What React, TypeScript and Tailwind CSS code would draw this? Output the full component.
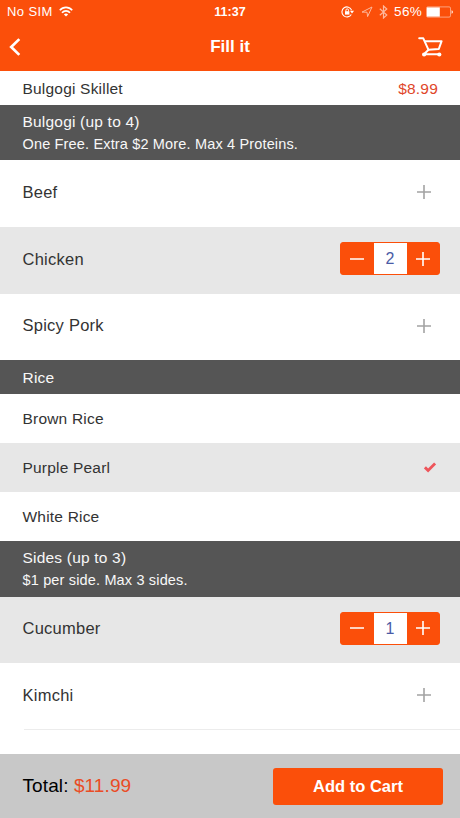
import clsx from 'clsx'

function StatusBar() {
  return (
    <div className="grid h-6 grid-cols-[1fr_auto_1fr] items-center pl-[7px] pr-[7px] text-[13px] leading-6">
      <div className="flex items-center gap-[6px]">
        <span className="tracking-[0.4px]">No SIM</span>
        <svg width="14" height="11" viewBox="0 0 14 11" fill="none" stroke="currentColor" strokeWidth="1.7" className="-mt-px">
          <path d="M0.8 4.2C4.2 0.4 9.8 0.4 13.2 4.2" />
          <path d="M3 6.7c2.2-2.4 5.8-2.4 8 0" />
          <path d="M7 10.6 4.9 8.4c1.2-1.1 3-1.1 4.2 0Z" fill="currentColor" stroke="none" />
        </svg>
      </div>
      <span className="text-[12.5px] font-bold">11:37</span>
      <div className="flex items-center justify-end">
        <svg width="14" height="12" viewBox="0 0 14 12" fill="none" stroke="currentColor" className="mr-[6px]">
          <path d="M10.6 4.1A5 5 0 1 0 10.3 8.4" strokeWidth="1.1" />
          <path d="M8.9 4.8h4.2L11 7.4Z" fill="currentColor" stroke="none" />
          <rect x="4" y="5.2" width="4.4" height="3.4" fill="currentColor" stroke="none" />
          <path d="M4.9 5.4V4.2a1.3 1.3 0 0 1 2.6 0v1.2" strokeWidth="1" />
        </svg>
        <svg width="12" height="12" viewBox="0 0 12 12" fill="none" stroke="currentColor" className="mr-[6px] opacity-60">
          <path d="M1 6.1 11 1 6.6 10.6 6 6.2Z" strokeWidth="1" />
        </svg>
        <svg width="9" height="14" viewBox="0 0 9 14" fill="none" stroke="currentColor" className="mr-[6px] opacity-60">
          <path d="M0.8 3.8 7.8 10 4.5 13V1L7.8 4 0.8 10.2" strokeWidth="1.2" />
        </svg>
        <span className="mr-[4px] text-[13.5px] tracking-[0.3px]">56%</span>
        <svg width="27" height="12" viewBox="0 0 27 12" fill="none">
          <rect x="0.5" y="0.9" width="24" height="10.2" rx="1.3" stroke="#fff" strokeOpacity="0.6" strokeWidth="0.8" />
          <rect x="1" y="1.4" width="12.8" height="9.2" fill="#fff" />
          <path d="M25.6 4.2c1.6 0.6 1.6 3 0 3.6Z" fill="#fff" />
        </svg>
      </div>
    </div>
  )
}

function NavBar() {
  return (
    <div className="grid h-[47px] grid-cols-3 items-center pb-px pl-[9px] pr-[17px]">
      <svg width="12" height="18" viewBox="0 0 12 18" fill="none" stroke="currentColor" strokeWidth="2.7">
        <path d="M10.3 1.1 2.2 9l8.1 7.9" />
      </svg>
      <h1 className="pl-2 text-center text-[17px] font-bold">Fill it</h1>
      <svg
        width="25"
        height="20"
        viewBox="0 0 25 20"
        fill="none"
        stroke="currentColor"
        strokeWidth="2"
        strokeLinejoin="round"
        strokeLinecap="round"
        className="justify-self-end"
      >
        <path d="M1.2 1.3h4.1l5.2 11.5-4.5 4.4h15.3" />
        <path d="M7 4.2h16.6l-2.8 7.8-10.3 0.8" />
        <circle cx="6.1" cy="17.5" r="2.1" fill="currentColor" stroke="none" />
        <circle cx="21.3" cy="17.5" r="2.1" fill="currentColor" stroke="none" />
      </svg>
    </div>
  )
}

function Plus() {
  return (
    <svg width="14" height="14" viewBox="0 0 14 14" stroke="currentColor" strokeWidth="1.6">
      <path d="M0 7h14M7 0v14" />
    </svg>
  )
}

function Stepper({ value }: { value: number }) {
  return (
    <div className="flex h-[33px] w-[100px] overflow-hidden rounded-[3px] border border-[#fb4f0a] bg-[#fb4f0a] text-white">
      <button className="flex flex-1 items-center justify-center">
        <svg width="14" height="2" viewBox="0 0 14 2" stroke="currentColor" strokeWidth="1.6">
          <path d="M0 1h14" />
        </svg>
      </button>
      <span className="w-[33px] bg-white text-center text-base leading-[32px] text-[#4a5ba6]">{value}</span>
      <button className="flex flex-1 items-center justify-center">
        <Plus />
      </button>
    </div>
  )
}

function SectionHeader({ title, note }: { title: string; note?: string }) {
  return (
    <div
      className={clsx(
        'flex shrink-0 flex-col justify-center bg-[#555] pl-[22.5px] pt-px text-[#f8f8f8]',
        note ? 'h-[55.7px]' : 'h-[33.5px]',
      )}
    >
      <h2 className="text-[15.5px] leading-[22px] tracking-[0.2px]">{title}</h2>
      {note && <p className="text-[14.5px] leading-[22px] tracking-[0.16px]">{note}</p>}
    </div>
  )
}

function QuantityRow({ name, count = 0 }: { name: string; count?: number }) {
  return (
    <div
      className={clsx(
        'flex h-[66.7px] shrink-0 items-center justify-between pb-[3px] pl-[22.5px] pr-5',
        count > 0 ? 'bg-[#e7e7e7]' : 'bg-white',
      )}
    >
      <span className="text-[16.5px] tracking-[0.25px]">{name}</span>
      {count > 0 ? (
        <Stepper value={count} />
      ) : (
        <button className="mr-[9px] text-[#a3a3a3]">
          <Plus />
        </button>
      )}
    </div>
  )
}

function ChoiceRow({ name, selected = false }: { name: string; selected?: boolean }) {
  return (
    <div
      className={clsx(
        'flex h-[49px] shrink-0 items-center justify-between pl-[22.5px] pr-6',
        selected ? 'bg-[#e7e7e7]' : 'bg-white',
      )}
    >
      <span className="pt-px text-[15.5px] tracking-[0.2px]">{name}</span>
      {selected && (
        <svg width="12" height="11" viewBox="0 0 12 11" fill="none" stroke="#ee555b" strokeWidth="2.9">
          <path d="M0.9 5.3 4.1 8.5 11.1 1.4" />
        </svg>
      )}
    </div>
  )
}

export default function App() {
  return (
    <div className="flex h-screen flex-col overflow-hidden bg-white font-['Liberation_Sans',Arial,sans-serif] text-[#333]">
      <header className="h-[71px] shrink-0 bg-[#fb4f0a] text-white">
        <StatusBar />
        <NavBar />
      </header>

      <main className="flex min-h-0 flex-1 flex-col">
        <div className="flex h-[33.7px] shrink-0 items-center justify-between pl-[22.5px] pr-[22px] pt-px text-[15.5px] tracking-[0.2px]">
          <span>Bulgogi Skillet</span>
          <span className="text-[#e0462a]">$8.99</span>
        </div>

        <SectionHeader title="Bulgogi (up to 4)" note="One Free. Extra $2 More. Max 4 Proteins." />
        <QuantityRow name="Beef" />
        <QuantityRow name="Chicken" count={2} />
        <QuantityRow name="Spicy Pork" />

        <SectionHeader title="Rice" />
        <ChoiceRow name="Brown Rice" />
        <ChoiceRow name="Purple Pearl" selected />
        <ChoiceRow name="White Rice" />

        <SectionHeader title="Sides (up to 3)" note="$1 per side. Max 3 sides." />
        <QuantityRow name="Cucumber" count={1} />
        <QuantityRow name="Kimchi" />
        <div className="ml-6 -mt-px h-px shrink-0 bg-[#ececec]" />
      </main>

      <footer className="flex h-16 shrink-0 items-center justify-between bg-[#c8c8c8] pl-[22.5px] pr-[17px]">
        <p className="text-[19px] tracking-[0.1px] text-black">
          Total: <span className="text-[#ea4c25]">$11.99</span>
        </p>
        <button className="h-[37px] w-[170px] rounded-[3px] bg-[#fb4f0a] text-[16.5px] font-bold text-white">
          Add to Cart
        </button>
      </footer>
    </div>
  )
}
